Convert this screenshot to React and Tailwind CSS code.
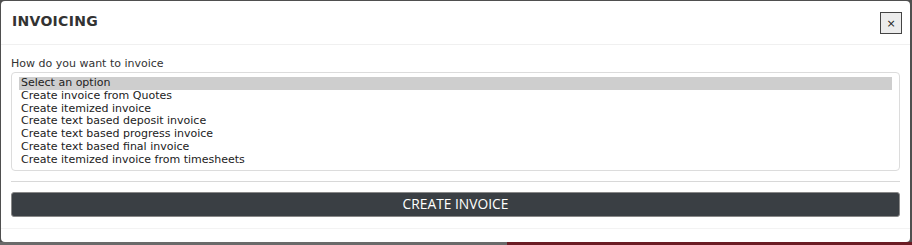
import { useState } from 'react';

const options = [
  'Select an option',
  'Create invoice from Quotes',
  'Create itemized invoice',
  'Create text based deposit invoice',
  'Create text based progress invoice',
  'Create text based final invoice',
  'Create itemized invoice from timesheets',
];

function App() {
  const [selected, setSelected] = useState(0);

  return (
    <div className="w-[912px] h-[245px] bg-[#4f4f4f] flex flex-col overflow-hidden font-['DejaVu_Sans',sans-serif]">
      <div className="ml-[1px] mt-[1px] w-[909px] h-[241px] bg-white rounded-[4px] flex flex-col">
        {/* header */}
        <div className="h-[44px] border-b border-[#f0f0f0] flex items-center justify-between pl-[11px] pr-[8px]">
          <h1 className="text-[14px] font-bold text-[#333] tracking-[0.3px] mt-[-3px]">INVOICING</h1>
          <button className="w-[22px] h-[22px] mt-[1px] border border-[#444] bg-[#ececec] flex items-center justify-center text-[11px] text-[#222] leading-none">
            ×
          </button>
        </div>

        {/* body */}
        <div className="px-[10px] pt-[12px]">
          <label className="block text-[11px] text-[#333] leading-[14px] mb-[1px]">How do you want to invoice</label>
          <div className="h-[99px] border border-[#dcdcdc] rounded-[4px] px-[7px] pt-[4px]">
            {options.map((opt, i) => (
              <div
                key={opt}
                onClick={() => setSelected(i)}
                className={
                  'text-[11px] leading-[12.8px] px-[2px] text-[#222] ' +
                  (selected === i ? 'bg-[#cecece]' : '')
                }
              >
                {opt}
              </div>
            ))}
          </div>
          <div className="mt-[10px] border-t border-[#d8d8d8]" />
        </div>

        {/* action */}
        <div className="px-[10px] pt-[10px] pb-[11px] border-b border-[#f3f3f3]">
          <button className="w-full h-[25px] bg-[#3a3f44] border border-[#888] rounded-[3px] text-white text-[13.8px] font-['Open_Sans',sans-serif] flex items-center justify-center">
            CREATE INVOICE
          </button>
        </div>
      </div>
      <div className="flex mt-auto h-[3px]">
        <div className="w-[507px] bg-[#6a6a6a]" />
        <div className="flex-1 bg-[#6b1c24]" />
      </div>
    </div>
  );
}

export default App;
